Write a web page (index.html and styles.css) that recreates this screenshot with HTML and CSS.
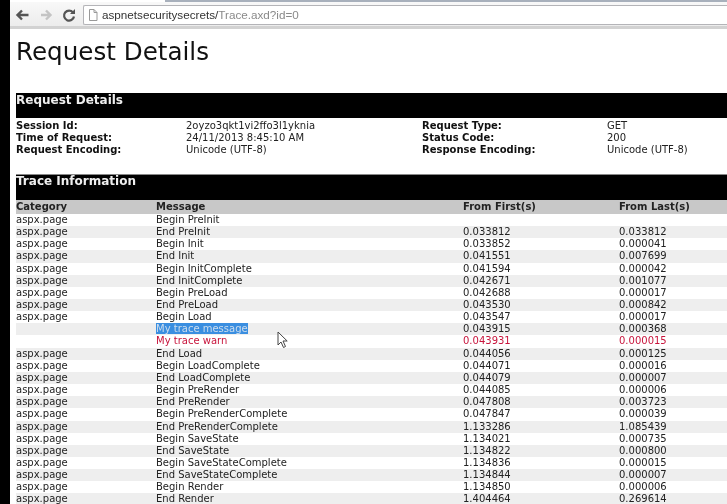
FILE: index.html
```html
<!DOCTYPE html>
<html lang="en">
<head>
  <meta charset="UTF-8">
  <title>Trace</title>
  <link rel="stylesheet" href="styles.css">
</head>
<body>
  <div class="window">
    <div class="tabline"></div>
    <div class="toolbar">
      <svg class="nav" width="64" height="16" viewBox="0 0 64 16">
        <path d="M16.500 8H6M10 3.500 5.500 8 10 12.500" fill="none" stroke="#555" stroke-width="2.400"/>
        <path d="M29 8h9M34 3.500 38.500 8 34 12.500" fill="none" stroke="#c4c4c4" stroke-width="2.400"/>
        <path d="M61 5.500A5 5 0 1 0 62 9.500" fill="none" stroke="#555" stroke-width="2.200"/>
        <path d="M63 2v5h-5z" fill="#555"/>
      </svg>
      <div class="address">
        <svg width="10" height="12" viewBox="0 0 10 12">
          <path d="M1.500.5h4.500l3 3v8h-7.500zM6 .5v3h3" fill="#fff" stroke="#999"/>
        </svg>
        <span class="host">aspnetsecuritysecrets/</span><span class="path">Trace.axd?id=0</span>
      </div>
    </div>

    <div class="page">
      <h1>Request Details</h1>

      <h2 class="bar">Request Details</h2>
      <div class="details">
        <b>Session Id:</b><span>2oyzo3qkt1vi2ffo3l1yknia</span><b>Request Type:</b><span>GET</span>
        <b>Time of Request:</b><span>24/11/2013 8:45:10 AM</span><b>Status Code:</b><span>200</span>
        <b>Request Encoding:</b><span>Unicode (UTF-8)</span><b>Response Encoding:</b><span>Unicode (UTF-8)</span>
      </div>

      <h2 class="bar trace-bar">Trace Information</h2>
      <div class="trace">
        <div class="row head"><span>Category</span><span>Message</span><span>From First(s)</span><span>From Last(s)</span></div>
        <div class="row"><span>aspx.page</span><span>Begin PreInit</span><span></span><span></span></div>
        <div class="row alt"><span>aspx.page</span><span>End PreInit</span><span>0.033812</span><span>0.033812</span></div>
        <div class="row"><span>aspx.page</span><span>Begin Init</span><span>0.033852</span><span>0.000041</span></div>
        <div class="row alt"><span>aspx.page</span><span>End Init</span><span>0.041551</span><span>0.007699</span></div>
        <div class="row"><span>aspx.page</span><span>Begin InitComplete</span><span>0.041594</span><span>0.000042</span></div>
        <div class="row alt"><span>aspx.page</span><span>End InitComplete</span><span>0.042671</span><span>0.001077</span></div>
        <div class="row"><span>aspx.page</span><span>Begin PreLoad</span><span>0.042688</span><span>0.000017</span></div>
        <div class="row alt"><span>aspx.page</span><span>End PreLoad</span><span>0.043530</span><span>0.000842</span></div>
        <div class="row"><span>aspx.page</span><span>Begin Load</span><span>0.043547</span><span>0.000017</span></div>
        <div class="row alt"><span></span><span><mark>My trace message</mark></span><span>0.043915</span><span>0.000368</span></div>
        <div class="row warn"><span></span><span>My trace warn</span><span>0.043931</span><span>0.000015</span></div>
        <div class="row alt"><span>aspx.page</span><span>End Load</span><span>0.044056</span><span>0.000125</span></div>
        <div class="row"><span>aspx.page</span><span>Begin LoadComplete</span><span>0.044071</span><span>0.000016</span></div>
        <div class="row alt"><span>aspx.page</span><span>End LoadComplete</span><span>0.044079</span><span>0.000007</span></div>
        <div class="row"><span>aspx.page</span><span>Begin PreRender</span><span>0.044085</span><span>0.000006</span></div>
        <div class="row alt"><span>aspx.page</span><span>End PreRender</span><span>0.047808</span><span>0.003723</span></div>
        <div class="row"><span>aspx.page</span><span>Begin PreRenderComplete</span><span>0.047847</span><span>0.000039</span></div>
        <div class="row alt"><span>aspx.page</span><span>End PreRenderComplete</span><span>1.133286</span><span>1.085439</span></div>
        <div class="row"><span>aspx.page</span><span>Begin SaveState</span><span>1.134021</span><span>0.000735</span></div>
        <div class="row alt"><span>aspx.page</span><span>End SaveState</span><span>1.134822</span><span>0.000800</span></div>
        <div class="row"><span>aspx.page</span><span>Begin SaveStateComplete</span><span>1.134836</span><span>0.000015</span></div>
        <div class="row alt"><span>aspx.page</span><span>End SaveStateComplete</span><span>1.134844</span><span>0.000007</span></div>
        <div class="row"><span>aspx.page</span><span>Begin Render</span><span>1.134850</span><span>0.000006</span></div>
        <div class="row alt"><span>aspx.page</span><span>End Render</span><span>1.404464</span><span>0.269614</span></div>
      </div>
    </div>
  </div>

  <svg class="cursor" width="12" height="18" viewBox="0 0 12 18">
    <path d="M1 1v13l3-3 2.500 5.500 2-1L6 10h4.200z" fill="#fff" stroke="#444"/>
  </svg>
</body>
</html>
```

FILE: styles.css
```css
html, body {
  height: 100%;
  margin: 0;
  overflow: hidden;
}

body {
  background-color: #000;
  color: #222;
  font-family: "DejaVu Sans", Verdana, sans-serif;
  font-size: 10px;
}

/* the source is a soft video frame */
.window {
  margin-left: 10px;
  height: 100%;
  background-color: #fff;
  overflow: hidden;
  filter: blur(0.3px);
}

.tabline {
  height: 2px;
  margin-left: 155px;
  background-color: #a8b0bc;
}

.toolbar {
  display: flex;
  align-items: center;
  gap: 7px;
  height: 27px;
  padding: 2px 0 0 2px;
  box-sizing: border-box;
  background: linear-gradient(#f8f8f8, #ececec);
  border-bottom: 3px solid #d2d2d2;
}

.nav {
  flex: none;
}

.address {
  display: flex;
  align-items: center;
  flex: 1;
  height: 20px;
  box-sizing: border-box;
  background-color: #fff;
  border: 1px solid #b4b4b8;
  border-right: none;
  border-radius: 2px 0 0 2px;
  padding: 0 0 1px 4px;
  font-family: "Liberation Sans", Arial, sans-serif;
  font-size: 11.700px;
}

.address svg {
  margin-right: 4px;
}

.host {
  color: #333;
}

.path {
  color: #8a8a8a;
}

.page {
  padding: 0 0 0 6px;
}

h1 {
  margin: 7px 0 0;
  font-size: 24.600px;
  font-weight: normal;
  line-height: 32px;
  color: #111;
}

.bar {
  margin: 25px 0 0;
  height: 25px;
  padding-top: 1px;
  box-sizing: border-box;
  background-color: #000;
  color: #eee;
  font-size: 12px;
  line-height: 13px;
}

.details {
  display: grid;
  grid-template-columns: 170px 236px 185px 1fr;
  grid-auto-rows: 12px;
  margin-top: 2px;
  line-height: 12px;
}

.details b {
  color: #111;
}

.trace-bar {
  margin-top: 18px;
  height: 26px;
  padding-top: 0;
  border-top: 1px solid #888;
}

.row {
  display: grid;
  grid-template-columns: 140px 307px 156px 1fr;
  height: 12.170px;
  line-height: 12.170px;
  white-space: nowrap;
}

.head {
  height: 13.900px;
  line-height: 13px;
  background-color: #c8c8c8;
  font-weight: bold;
  color: #222;
}

.alt {
  background-color: #eeeeee;
}

.warn {
  color: #c8143c;
}

mark {
  background-color: #3a8ee0;
  color: #cde;
}

.cursor {
  position: absolute;
  left: 277px;
  top: 331px;
}
```
